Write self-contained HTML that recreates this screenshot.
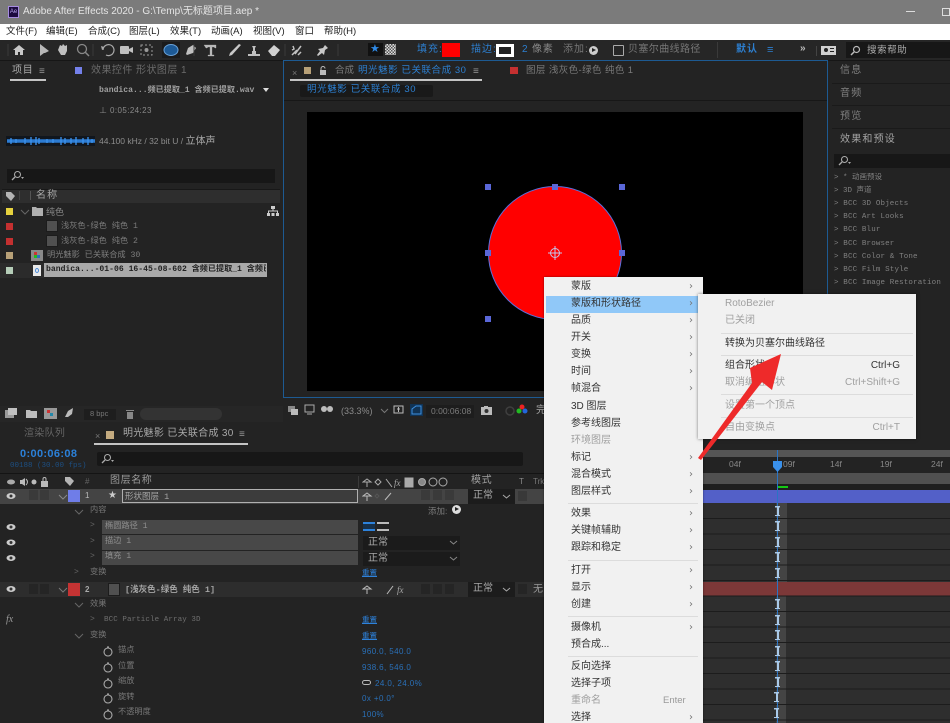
<!DOCTYPE html>
<html style="background:#232323"><head><meta charset="utf-8">
<style>
*{box-sizing:border-box}
html,body{margin:0;padding:0;width:950px;height:723px;overflow:hidden}
body{position:relative;font-family:"Liberation Sans","Noto Sans CJK SC",sans-serif;font-size:10px;color:#9a9a9a;filter:blur(.35px)}
.a{position:absolute}
.t{position:absolute;white-space:nowrap;line-height:14px}
.m{font-family:"Liberation Mono","Noto Sans CJK SC",monospace}
.b{color:#2d7fd0}
.mi{position:absolute;left:571px;font-size:10px;color:#333;white-space:nowrap;line-height:14px}
.ar{position:absolute;left:689px;font-size:10px;color:#777;line-height:14px;font-family:"DejaVu Sans",sans-serif}
.si{position:absolute;left:725px;font-size:10px;color:#333;white-space:nowrap;line-height:14px}
.sr{position:absolute;right:50px;font-size:10px;color:#333;white-space:nowrap;line-height:14px}
.dis{color:#a0a0a0}
.sep{position:absolute;background:#dcdcdc;height:1px}
.h{position:absolute;width:6px;height:6px;background:#5a67d8}
.dd{position:absolute;background:#1b1b1b;height:14px;color:#aaa;font-size:10px;line-height:14px;padding-left:5px}
.k{position:absolute;left:775px;width:5px;height:10px;background:linear-gradient(#a9c9e8,#a9c9e8) center/2px 100% no-repeat,linear-gradient(#a9c9e8,#a9c9e8) top/100% 1.500px no-repeat,linear-gradient(#a9c9e8,#a9c9e8) bottom/100% 1.500px no-repeat}
</style></head><body>

<!-- Title bar -->
<div class="a" style="left:0;top:0;width:950px;height:24px;background:#7b7b7b"></div>
<div class="a" style="left:8px;top:6px;width:11px;height:12px;background:#1c0a3f;border:1px solid #a58be0;color:#b9a6f0;font-size:6px;line-height:10px;text-align:center">Ae</div>
<div class="t" style="left:23px;top:5px;font-size:10px;color:#e4e4e4">Adobe After Effects 2020 - G:\Temp\无标题项目.aep *</div>
<div class="a" style="left:906px;top:11px;width:9px;height:1px;background:#ddd"></div>
<div class="a" style="left:942px;top:8px;width:8px;height:8px;border:1px solid #ddd"></div>

<!-- Menu bar -->
<div class="a" style="left:0;top:24px;width:950px;height:16px;background:#fff"></div>
<div class="t" style="left:6px;top:25px;color:#222;font-size:9.500px">文件(F)</div>
<div class="t" style="left:46px;top:25px;color:#222;font-size:9.500px">编辑(E)</div>
<div class="t" style="left:88px;top:25px;color:#222;font-size:9.500px">合成(C)</div>
<div class="t" style="left:129px;top:25px;color:#222;font-size:9.500px">图层(L)</div>
<div class="t" style="left:170px;top:25px;color:#222;font-size:9.500px">效果(T)</div>
<div class="t" style="left:211px;top:25px;color:#222;font-size:9.500px">动画(A)</div>
<div class="t" style="left:253px;top:25px;color:#222;font-size:9.500px">视图(V)</div>
<div class="t" style="left:295px;top:25px;color:#222;font-size:9.500px">窗口</div>
<div class="t" style="left:324px;top:25px;color:#222;font-size:9.500px">帮助(H)</div>

<!-- Toolbar -->
<div class="a" style="left:0;top:40px;width:950px;height:20px;background:#262626"></div>
<svg class="a" style="left:0;top:40px" width="345" height="20" viewBox="0 0 345 20">
<path d="M13 10l6-5 6 5h-2v5h-3v-3h-2v3h-3v-5z" fill="#c8c8c8"/>
<path d="M40 4v12l4-3 1 0 4-2z" fill="#b8b8b8"/>
<path d="M58 10l2-5 2 1 1-2 2 2 2-1v6l-2 4h-4z" fill="#c0c0c0"/>
<circle cx="82" cy="9" r="4.500" fill="none" stroke="#888" stroke-width="1.300"/><path d="M85 12l4 4" stroke="#888" stroke-width="1.500"/>
<path d="M103 10a5.500 5.500 0 1 1 3 5" fill="none" stroke="#aaa" stroke-width="1.200"/><path d="M101 6l3 1-2 3z" fill="#aaa"/>
<rect x="120" y="6" width="9" height="8" rx="1" fill="#c0c0c0"/><path d="M129 9l4-2v6l-4-2z" fill="#c0c0c0"/>
<rect x="141" y="5" width="11" height="10" fill="none" stroke="#999" stroke-dasharray="2 2"/><circle cx="146.500" cy="10" r="2" fill="#999"/>
<rect x="162" y="2" width="18" height="16" fill="#1b1b1b"/>
<ellipse cx="171" cy="10" rx="7" ry="5.500" fill="#1d5a96" stroke="#6aa2d8"/>
<path d="M186 14l2-6 5-3 3 3-3 5-6 2z" fill="#c0c0c0"/>
<path d="M204 5h12v3h-1l-1-1h-2v8h2v1h-6v-1h2V7h-2l-1 1h-1z" fill="#b8b8b8" stroke="#b8b8b8" stroke-width=".3"/>
<path d="M229 16l3-1 9-10-2-1-9 9z" fill="#c8c8c8"/>
<path d="M248 14h12v2h-12zM252 14v-3h1v-3l-1-2h4l-1 2v3h1v3z" fill="#c0c0c0"/>
<path d="M268 11l6-6 6 5-5 6h-3z" fill="#d0d0d0"/>
<path d="M292 15l5-5M301 6l-6 8M293 6l1 3-2 1M298 15l3-3" stroke="#c0c0c0" stroke-width="1.500"/>
<path d="M317 15l3-4-2-2 5-1 2-3 3 3-3 2-1 5-2-2-4 3z" fill="#c8c8c8"/>
<path d="M8 4v12M93 4v12M194 4v12M285 4v12M338 4v12" stroke="#3a3a3a"/>
</svg>
<div class="a" style="left:368px;top:43px;width:15px;height:13px;background:#111"></div>
<div class="t" style="left:370px;top:42px;color:#2f8ae6;font-size:11px;font-family:'DejaVu Sans',sans-serif">★</div>
<div class="a" style="left:385px;top:44px;width:11px;height:11px;background:repeating-conic-gradient(#ddd 0 25%,#555 0 50%) 0 0/3px 3px"></div>
<div class="t b" style="left:417px;top:43px;font-size:10px;letter-spacing:1px">填充:</div>
<div class="a" style="left:442px;top:43px;width:18px;height:14px;background:#ff0000"></div>
<div class="t b" style="left:471px;top:43px;font-size:10px;letter-spacing:1px">描边:</div>
<div class="a" style="left:496px;top:44px;width:18px;height:13px;background:#222;border:3px solid #fff"></div>
<div class="t b" style="left:522px;top:43px;font-size:10px">2</div>
<div class="t" style="left:532px;top:43px;font-size:10px;letter-spacing:.8px;color:#888">像素</div>
<div class="t" style="left:563px;top:43px;font-size:10px;letter-spacing:1px;color:#777">添加:</div>
<div class="a" style="left:589px;top:46px;width:9px;height:9px;border-radius:50%;background:#ccc"></div>
<div class="a" style="left:592px;top:48px;width:0;height:0;border-left:4px solid #222;border-top:2.500px solid transparent;border-bottom:2.500px solid transparent"></div>
<div class="a" style="left:613px;top:45px;width:11px;height:11px;border:1px solid #aaa;border-radius:1px"></div>
<div class="t" style="left:628px;top:43px;font-size:10px;letter-spacing:.4px;color:#777">贝塞尔曲线路径</div>
<div class="a" style="left:717px;top:42px;width:1px;height:16px;background:#3a3a3a"></div>
<div class="t b" style="left:736px;top:43px;font-size:10px;letter-spacing:1px;font-weight:bold">默认</div>
<div class="t b" style="left:767px;top:43px;font-size:11px">≡</div>
<div class="t" style="left:800px;top:42px;color:#bbb;font-size:10px;font-weight:bold">»</div>
<div class="a" style="left:816px;top:46px;width:1px;height:10px;background:#444"></div>
<div class="a" style="left:821px;top:46px;width:15px;height:9px;background:#d0d0d0"></div>
<div class="a" style="left:824px;top:48px;width:4px;height:4px;border-radius:50%;background:#222"></div>
<div class="a" style="left:830px;top:48px;width:4px;height:1px;background:#222;box-shadow:0 3px #222"></div>
<div class="a" style="left:846px;top:42px;width:104px;height:16px;background:#171717"></div>
<svg class="a" style="left:850px;top:45px" width="11" height="11"><circle cx="6.500" cy="4.500" r="3" fill="none" stroke="#bbb" stroke-width="1.200"/><path d="M4 7l-3 3" stroke="#bbb" stroke-width="1.500"/></svg>
<div class="t" style="left:867px;top:44px;color:#aaa;font-size:9.500px;letter-spacing:.6px">搜索帮助</div>
<div class="a" style="left:0;top:60px;width:950px;height:1px;background:#161616"></div>

<!-- Left panel -->
<div class="a" style="left:0;top:61px;width:283px;height:345px;background:#232323"></div>
<div class="t" style="left:12px;top:64px;font-size:10px;letter-spacing:.8px;color:#aaa">项目</div>
<div class="t" style="left:39px;top:65px;font-size:10px;color:#999">≡</div>
<div class="a" style="left:10px;top:79px;width:36px;height:1.500px;background:#c4c4c4"></div>
<div class="a" style="left:75px;top:67px;width:7px;height:7px;background:#7480ea"></div>
<div class="t" style="left:91px;top:64px;font-size:10px;letter-spacing:.45px;color:#6b6b6b">效果控件 形状图层 1</div>
<div class="t m" style="left:99px;top:84px;font-size:8.100px;color:#a0a0a0;font-weight:bold">bandica...频已提取_1 含频已提取.wav</div>
<div class="a" style="left:263px;top:88px;width:0;height:0;border-top:4px solid #ddd;border-left:3.500px solid transparent;border-right:3.500px solid transparent"></div>
<div class="t" style="left:99px;top:104px;font-size:8px;color:#8a8a8a;letter-spacing:.4px">⊥ 0:05:24:23</div>
<div class="a" style="left:6px;top:136px;width:89px;height:10px;background:#10161e"></div>
<svg class="a" style="left:7px;top:136px" width="88" height="10"><path d="M0 5H88" stroke="#2c7bd2" stroke-width="3.500"/><path d="M4 2v6M9 3v4M18 2v6M24 1v8M29 1v8M32 2v6M40 3v4M46 3v4M54 1v8M58 2v6M64 2v6M69 1v8M76 2v6M81 1v8M85 3v4" stroke="#3d93ee" stroke-width="1.300"/></svg>
<div class="t" style="left:99px;top:134px;font-size:8.500px;color:#8d8d8d">44.100 kHz / 32 bit U / <span style="font-size:10px;color:#a8a8a8">立体声</span></div>
<div class="a" style="left:7px;top:169px;width:268px;height:14px;background:#171717"></div>
<svg class="a" style="left:11px;top:170px" width="15" height="12"><circle cx="6.500" cy="4.500" r="3" fill="none" stroke="#aaa" stroke-width="1.100"/><path d="M4 7l-3 3" stroke="#aaa" stroke-width="1.300"/><path d="M10 7h3l-1.500 2z" fill="#aaa"/></svg>
<div class="a" style="left:2px;top:189px;width:278px;height:14px;background:#2e2e2e;border-top:1px solid #181818"></div>
<svg class="a" style="left:5px;top:191px" width="11" height="11"><path d="M1 1h5l4 4-4 5-5-5z" fill="#b5b5b5"/></svg>
<div class="a" style="left:19px;top:191px;width:1px;height:9px;background:#444"></div>
<div class="a" style="left:30px;top:191px;width:1px;height:9px;background:#555"></div>
<div class="t" style="left:36px;top:189px;font-size:10px;letter-spacing:1.100px;color:#a5a5a5">名称</div>
<div class="a" style="left:6px;top:208px;width:7px;height:7px;background:#e6d23e"></div>
<svg class="a" style="left:20px;top:208px" width="10" height="8"><path d="M1 2l4 4 4-4" fill="none" stroke="#666" stroke-width="1"/></svg>
<svg class="a" style="left:31px;top:205px" width="13" height="12"><path d="M1 2h4l1 1h6v8H1z" fill="#b0b0b0"/></svg>
<div class="t" style="left:46px;top:205px;font-size:9px;color:#8a8a8a">纯色</div>
<svg class="a" style="left:267px;top:205px" width="12" height="12"><rect x="4" y="1" width="4" height="3" fill="#ccc"/><rect x="0" y="8" width="3" height="3" fill="#ccc"/><rect x="4.500" y="8" width="3" height="3" fill="#ccc"/><rect x="9" y="8" width="3" height="3" fill="#ccc"/><path d="M6 4v2M1.500 8V6h9v2" stroke="#ccc" fill="none"/></svg>
<div class="a" style="left:6px;top:223px;width:7px;height:7px;background:#c43030"></div>
<div class="a" style="left:46px;top:220px;width:12px;height:12px;background:#505050;border:1px solid #1c1c1c"></div>
<div class="t m" style="left:61px;top:220px;font-size:8.200px;color:#7a7a7a">浅灰色-绿色 纯色 1</div>
<div class="a" style="left:6px;top:238px;width:7px;height:7px;background:#c43030"></div>
<div class="a" style="left:46px;top:235px;width:12px;height:12px;background:#505050;border:1px solid #1c1c1c"></div>
<div class="t m" style="left:61px;top:235px;font-size:8.200px;color:#7a7a7a">浅灰色-绿色 纯色 2</div>
<div class="a" style="left:6px;top:252px;width:7px;height:7px;background:#b7a077"></div>
<div class="a" style="left:31px;top:250px;width:12px;height:11px;background:#8a8a8a"></div>
<div class="a" style="left:34px;top:252px;width:3px;height:3px;background:#c33"></div>
<div class="a" style="left:37px;top:255px;width:3px;height:3px;background:#2a6fc0;box-shadow:-3px 0 #2b2"></div>
<div class="t m" style="left:47px;top:249px;font-size:8.200px;color:#7e7e7e">明光魅影 已关联合成 30</div>
<div class="a" style="left:0;top:263px;width:44px;height:15px;background:#2b2b2b"></div>
<div class="a" style="left:6px;top:267px;width:7px;height:7px;background:#b5cdb8"></div>
<div class="a" style="left:33px;top:265px;width:8px;height:11px;background:#e8e8e8"></div>
<div class="a" style="left:35px;top:268px;width:4px;height:5px;border:1px solid #4a8ad8;border-radius:50%"></div>
<div class="a" style="left:44px;top:263px;width:223px;height:14px;background:#a9a9a9"></div>
<div class="t m" style="left:46px;top:263px;width:220px;overflow:hidden;font-size:8.100px;color:#222;font-weight:bold">bandica...-01-06 16-45-08-602 含频已提取_1 含频已提取.wav</div>

<!-- Left panel bottom bar -->
<div class="a" style="left:0;top:406px;width:283px;height:16px;background:#262626"></div>
<svg class="a" style="left:4px;top:407px" width="130" height="14">
<rect x="1" y="3" width="9" height="8" fill="#9a9a9a"/><rect x="4" y="1" width="9" height="7" fill="#c0c0c0"/>
<path d="M22 3h4l1 1h6v7H22z" fill="#bcbcbc"/>
<rect x="40" y="1" width="13" height="11" fill="#999"/><rect x="43" y="3" width="3" height="3" fill="#c33"/><rect x="46" y="6" width="3" height="3" fill="#28a"/>
<path d="M61 10l3-6 5-3-1 6-4 3z" fill="#bbb"/>
<path d="M122 3h8v1h-8zM123 5h6v7h-6z" fill="#888"/>
</svg>
<div class="a" style="left:84px;top:409px;width:32px;height:11px;background:#1e1e1e"></div>
<div class="t" style="left:90px;top:407px;font-size:7.500px;color:#777">8 bpc</div>
<div class="a" style="left:140px;top:408px;width:82px;height:12px;border-radius:6px;background:#333"></div>

<!-- Comp panel -->
<div class="a" style="left:283px;top:60px;width:545px;height:338px;border:1px solid #1d5a92;background:#232323"></div>
<div class="t" style="left:292px;top:66px;font-size:9px;color:#777">×</div>
<div class="a" style="left:304px;top:67px;width:7px;height:7px;background:#b7a077"></div>
<svg class="a" style="left:319px;top:66px" width="8" height="9"><rect x="1" y="4" width="6" height="5" fill="#bbb"/><path d="M2 4V2.500a2 2 0 0 1 4 0" fill="none" stroke="#bbb"/></svg>
<div class="t" style="left:335px;top:64px;font-size:9.500px;color:#7d7d7d">合成</div>
<div class="t b" style="left:358px;top:64px;font-size:9.500px;letter-spacing:.55px">明光魅影 已关联合成 30</div>
<div class="t" style="left:473px;top:65px;font-size:10px;color:#999">≡</div>
<div class="a" style="left:290px;top:79px;width:192px;height:1.500px;background:#c4c4c4"></div>
<div class="a" style="left:510px;top:67px;width:8px;height:7px;background:#c43030"></div>
<div class="t" style="left:526px;top:64px;font-size:9.500px;letter-spacing:.4px;color:#7a7a7a">图层 浅灰色-绿色 纯色 1</div>
<div class="a" style="left:300px;top:85px;width:133px;height:12px;background:#191919;border-radius:2px"></div>
<div class="t b" style="left:307px;top:83px;font-size:9.500px;letter-spacing:.6px">明光魅影 已关联合成 30</div>
<div class="a" style="left:284px;top:100px;width:543px;height:1px;background:#171717"></div>
<div class="a" style="left:307px;top:112px;width:496px;height:279px;background:#000"></div>
<div class="a" style="left:488px;top:186px;width:134px;height:134px;border-radius:50%;background:#ff0000;border:1px solid #5a70dc"></div>
<div class="h" style="left:485px;top:184px"></div><div class="h" style="left:552px;top:184px"></div><div class="h" style="left:619px;top:184px"></div>
<div class="h" style="left:485px;top:250px"></div><div class="h" style="left:619px;top:250px"></div>
<div class="h" style="left:485px;top:316px"></div><div class="h" style="left:552px;top:316px"></div>
<svg class="a" style="left:547px;top:245px" width="16" height="16"><circle cx="8" cy="8" r="4.500" fill="none" stroke="#c5c5ea"/><path d="M8 1v14M1 8h14" stroke="#c5c5ea"/></svg>

<!-- Comp bottom bar -->
<svg class="a" style="left:286px;top:403px" width="262" height="16">
<rect x="2" y="3" width="7" height="6" fill="#888"/><rect x="5" y="6" width="7" height="6" fill="#bbb"/>
<rect x="19" y="2" width="9" height="7" fill="none" stroke="#aaa"/><path d="M21 11h5" stroke="#aaa"/>
<circle cx="38" cy="6" r="3" fill="#bbb"/><circle cx="44" cy="6" r="3" fill="#bbb"/>
<rect x="108" y="3" width="9" height="7" fill="none" stroke="#bbb"/><path d="M111 6h3M112.500 4v5" stroke="#bbb"/>
<rect x="124" y="1" width="13" height="12" fill="#103355"/><path d="M126 11V6l4-3h5v8z" fill="none" stroke="#3d8fe0"/>
<rect x="195" y="4" width="11" height="8" fill="#bbb"/><circle cx="200.500" cy="8" r="2" fill="#333"/><rect x="198" y="3" width="4" height="1" fill="#bbb"/>
<circle cx="224" cy="8" r="4" fill="none" stroke="#3f3f3f" stroke-width="1.500"/>
<circle cx="236" cy="4" r="2.500" fill="#e22"/><circle cx="233" cy="8" r="2.500" fill="#2b2"/><circle cx="239" cy="8" r="2.500" fill="#26d"/>
</svg>
<div class="t" style="left:341px;top:404px;font-size:9px;color:#8a8a8a">(33.3%)</div>
<svg class="a" style="left:380px;top:408px" width="9" height="6"><path d="M1 1l3.500 3.500L8 1" stroke="#777" fill="none"/></svg>
<div class="a" style="left:426px;top:405px;width:48px;height:13px;background:#1d1d1d"></div>
<div class="t" style="left:431px;top:404px;font-size:8.500px;color:#7c7c7c">0:00:06:08</div>
<div class="t" style="left:536px;top:404px;font-size:10px;color:#a8a8a8">完</div>

<!-- Right panels -->
<div class="a" style="left:832px;top:83px;width:118px;height:1px;background:#1a1a1a"></div>
<div class="t" style="left:840px;top:64px;font-size:10px;letter-spacing:1.200px;color:#808080">信息</div>
<div class="a" style="left:832px;top:105px;width:118px;height:1px;background:#1a1a1a"></div>
<div class="t" style="left:840px;top:87px;font-size:10px;letter-spacing:1.200px;color:#808080">音频</div>
<div class="a" style="left:832px;top:128px;width:118px;height:1px;background:#1a1a1a"></div>
<div class="t" style="left:840px;top:110px;font-size:10px;letter-spacing:1.200px;color:#808080">预览</div>
<div class="t" style="left:840px;top:133px;font-size:10px;letter-spacing:1.200px;color:#a5a5a5">效果和预设</div>
<div class="a" style="left:834px;top:154px;width:116px;height:14px;background:#171717"></div>
<svg class="a" style="left:838px;top:155px" width="15" height="12"><circle cx="6.500" cy="4.500" r="3" fill="none" stroke="#aaa" stroke-width="1.100"/><path d="M4 7l-3 3" stroke="#aaa" stroke-width="1.300"/><path d="M10 7h3l-1.500 2z" fill="#aaa"/></svg>
<div class="t m" style="left:834px;top:171px;font-size:7.500px;color:#808080">&gt; * 动画预设</div>
<div class="t m" style="left:834px;top:184px;font-size:7.500px;color:#808080">&gt; 3D 声道</div>
<div class="t m" style="left:834px;top:197px;font-size:7.500px;color:#808080;letter-spacing:.15px">&gt; BCC 3D Objects</div>
<div class="t m" style="left:834px;top:210px;font-size:7.500px;color:#808080;letter-spacing:.15px">&gt; BCC Art Looks</div>
<div class="t m" style="left:834px;top:223px;font-size:7.500px;color:#808080;letter-spacing:.15px">&gt; BCC Blur</div>
<div class="t m" style="left:834px;top:237px;font-size:7.500px;color:#808080;letter-spacing:.15px">&gt; BCC Browser</div>
<div class="t m" style="left:834px;top:250px;font-size:7.500px;color:#808080;letter-spacing:.15px">&gt; BCC Color &amp; Tone</div>
<div class="t m" style="left:834px;top:263px;font-size:7.500px;color:#808080;letter-spacing:.15px">&gt; BCC Film Style</div>
<div class="t m" style="left:834px;top:276px;font-size:7.500px;color:#808080;letter-spacing:.15px">&gt; BCC Image Restoration</div>

<!-- Timeline -->
<div class="a" style="left:0;top:423px;width:950px;height:300px;background:#232323"></div>
<div class="t" style="left:24px;top:427px;font-size:10px;letter-spacing:.3px;color:#666">渲染队列</div>
<div class="t" style="left:95px;top:429px;font-size:9px;color:#777">×</div>
<div class="a" style="left:106px;top:431px;width:8px;height:8px;background:#c4ab80"></div>
<div class="t" style="left:123px;top:427px;font-size:10px;letter-spacing:.3px;color:#a8a8a8">明光魅影 已关联合成 30</div>
<div class="t" style="left:239px;top:428px;font-size:10px;color:#999">≡</div>
<div class="a" style="left:94px;top:443px;width:154px;height:1.500px;background:#c4c4c4"></div>
<div class="t" style="left:20px;top:447px;font-size:11px;font-weight:bold;color:#2b80d8;letter-spacing:.35px">0:00:06:08</div>
<div class="t m" style="left:10px;top:459px;font-size:7.500px;color:#1d4f82">00188 (30.00 fps)</div>
<div class="a" style="left:97px;top:452px;width:426px;height:14px;background:#171717;border-radius:2px"></div>
<svg class="a" style="left:101px;top:453px" width="15" height="12"><circle cx="6.500" cy="4.500" r="3" fill="none" stroke="#aaa" stroke-width="1.100"/><path d="M4 7l-3 3" stroke="#aaa" stroke-width="1.300"/><path d="M10 7h3l-1.500 2z" fill="#aaa"/></svg>
<div class="a" style="left:0;top:473px;width:544px;height:1px;background:#141414"></div>
<svg class="a" style="left:5px;top:475px" width="95" height="14">
<ellipse cx="6" cy="7" rx="4" ry="2.500" fill="#aaa"/>
<path d="M15 5h2l3-2v8l-3-2h-2z" fill="#bbb"/><path d="M21 4c2 2 2 4 0 6" fill="none" stroke="#bbb"/>
<circle cx="29" cy="7" r="2.500" fill="#bbb"/>
<rect x="36" y="6" width="7" height="6" fill="#bbb"/><path d="M38 6V4a1.500 1.500 0 0 1 3 0v2" fill="none" stroke="#bbb"/>
<path d="M60 2h5l4 4-4 5-5-5z" fill="#b5b5b5"/>
</svg>
<div class="t" style="left:85px;top:475px;font-size:8px;color:#666">#</div>
<div class="t" style="left:110px;top:474px;font-size:10px;letter-spacing:.6px;color:#9a9a9a">图层名称</div>
<div class="a" style="left:358px;top:476px;width:1px;height:12px;background:#3a3a3a"></div>
<svg class="a" style="left:362px;top:476px" width="95" height="13" stroke="#aaa" fill="none">
<path d="M1 6l4-3 4 3zM5 6v5"/><path d="M13 6l3-3 3 3-3 3z"/><path d="M24 3l6 8"/>
<text x="32" y="10" font-size="9" font-style="italic" fill="#aaa" stroke="none" font-family="Liberation Serif">fx</text>
<rect x="43" y="2" width="8" height="9" fill="#aaa"/><circle cx="60" cy="6" r="3.500" fill="#888"/><circle cx="71" cy="6" r="4"/><circle cx="81" cy="6" r="4"/>
</svg>
<div class="t" style="left:471px;top:474px;font-size:10px;letter-spacing:.6px;color:#a0a0a0">模式</div>
<div class="t" style="left:519px;top:475px;font-size:8px;color:#888">T</div>
<div class="t" style="left:533px;top:475px;font-size:8px;color:#777">Trk</div>
<div class="a" style="left:0;top:489px;width:544px;height:1px;background:#141414"></div>

<!-- Layer 1 -->
<div class="a" style="left:0;top:489px;width:544px;height:15px;background:#444"></div>
<svg class="a" style="left:6px;top:492px" width="11" height="9"><ellipse cx="5" cy="4" rx="4.500" ry="3" fill="#ccc"/><circle cx="5" cy="4" r="1.500" fill="#333"/></svg>
<div class="a" style="left:29px;top:490px;width:9px;height:10px;background:#3a3a3a;box-shadow:11px 0 #3a3a3a"></div>
<svg class="a" style="left:58px;top:494px" width="10" height="7"><path d="M1 1l4 4 4-4" fill="none" stroke="#888"/></svg>
<div class="a" style="left:68px;top:490px;width:12px;height:12px;background:#6f7de8"></div>
<div class="t" style="left:85px;top:489px;font-size:8px;color:#bbb">1</div>
<div class="t" style="left:108px;top:489px;font-size:10px;color:#ccc;font-family:'DejaVu Sans',sans-serif">★</div>
<div class="a" style="left:122px;top:489px;width:236px;height:14px;background:#3c3c3c;border:1px solid #b0b0b0"></div>
<div class="t m" style="left:125px;top:490px;font-size:8.500px;color:#a5a5a5">形状图层 1</div>
<svg class="a" style="left:362px;top:491px" width="30" height="11" stroke="#bbb" fill="none"><path d="M1 5l4-3 4 3zM5 5v5"/><path d="M13 5l2-2 2 2-2 2z" stroke="#555"/><path d="M23 9l6-7"/></svg>
<div class="a" style="left:421px;top:490px;width:9px;height:10px;background:#3a3a3a;box-shadow:12px 0 #3a3a3a,24px 0 #3a3a3a"></div>
<div class="dd" style="left:468px;top:489px;width:47px;height:15px;background:#1c1c1c">正常</div>
<svg class="a" style="left:502px;top:494px" width="9" height="6"><path d="M1 1l3.500 3L8 1" stroke="#aaa" fill="none"/></svg>
<div class="a" style="left:518px;top:491px;width:9px;height:10px;background:#393939"></div>

<!-- Layer children -->
<svg class="a" style="left:74px;top:509px" width="10" height="7"><path d="M1 1l4 4 4-4" fill="none" stroke="#666"/></svg>
<div class="t m" style="left:90px;top:504px;font-size:8.200px;color:#777">内容</div>
<div class="t" style="left:428px;top:504px;font-size:8.500px;color:#7a7a7a">添加:</div>
<div class="a" style="left:452px;top:505px;width:9px;height:9px;border-radius:50%;background:#ddd"></div>
<div class="a" style="left:455px;top:507px;width:0;height:0;border-left:4px solid #222;border-top:2.500px solid transparent;border-bottom:2.500px solid transparent"></div>

<div class="a" style="left:102px;top:520px;width:256px;height:14px;background:#484848"></div>
<div class="a" style="left:102px;top:535px;width:256px;height:15px;background:#484848"></div>
<div class="a" style="left:102px;top:551px;width:256px;height:14px;background:#484848"></div>
<svg class="a" style="left:6px;top:523px" width="11" height="40"><g fill="#ccc"><ellipse cx="5" cy="4" rx="4.500" ry="3"/><ellipse cx="5" cy="19.500" rx="4.500" ry="3"/><ellipse cx="5" cy="35" rx="4.500" ry="3"/></g><g fill="#333"><circle cx="5" cy="4" r="1.500"/><circle cx="5" cy="19.500" r="1.500"/><circle cx="5" cy="35" r="1.500"/></g></svg>
<div class="t m" style="left:90px;top:519px;font-size:8px;color:#666">&gt;</div>
<div class="t m" style="left:90px;top:535px;font-size:8px;color:#666">&gt;</div>
<div class="t m" style="left:90px;top:550px;font-size:8px;color:#666">&gt;</div>
<div class="t m" style="left:105px;top:520px;font-size:8.200px;color:#8f8f8f">椭圆路径 1</div>
<div class="t m" style="left:105px;top:535px;font-size:8.200px;color:#8f8f8f">描边 1</div>
<div class="t m" style="left:105px;top:550px;font-size:8.200px;color:#8f8f8f">填充 1</div>
<div class="a" style="left:363px;top:522px;width:12px;height:9px;border-top:2px solid #2d82dc;border-bottom:2px solid #2d82dc;background:#16304a"></div>
<div class="a" style="left:377px;top:522px;width:12px;height:9px;border-top:2px solid #bbb;border-bottom:2px solid #bbb"></div>
<div class="dd" style="left:363px;top:536px;width:97px">正常</div>
<div class="dd" style="left:363px;top:552px;width:97px">正常</div>
<svg class="a" style="left:449px;top:540px" width="9" height="6"><path d="M1 1l3.500 3L8 1" stroke="#888" fill="none"/></svg>
<svg class="a" style="left:449px;top:556px" width="9" height="6"><path d="M1 1l3.500 3L8 1" stroke="#888" fill="none"/></svg>
<div class="t m" style="left:74px;top:566px;font-size:8px;color:#666">&gt;</div>
<div class="t m" style="left:90px;top:566px;font-size:8.200px;color:#777">变换</div>
<div class="t m" style="left:362px;top:567px;font-size:7.500px;color:#2d82dc;text-decoration:underline">重置</div>

<!-- Layer 2 -->
<div class="a" style="left:0;top:582px;width:544px;height:15px;background:#2d2d2d"></div>
<svg class="a" style="left:6px;top:585px" width="11" height="9"><ellipse cx="5" cy="4" rx="4.500" ry="3" fill="#ccc"/><circle cx="5" cy="4" r="1.500" fill="#333"/></svg>
<div class="a" style="left:29px;top:584px;width:9px;height:10px;background:#252525;box-shadow:11px 0 #252525"></div>
<svg class="a" style="left:58px;top:587px" width="10" height="7"><path d="M1 1l4 4 4-4" fill="none" stroke="#777"/></svg>
<div class="a" style="left:68px;top:583px;width:12px;height:13px;background:#c43333"></div>
<div class="t" style="left:85px;top:583px;font-size:8px;color:#aaa;font-weight:bold">2</div>
<div class="a" style="left:108px;top:583px;width:12px;height:13px;background:#505050;border:1px solid #1c1c1c"></div>
<div class="t m" style="left:125px;top:583px;font-size:8.500px;color:#a5a5a5;font-weight:bold">[浅灰色-绿色 纯色 1]</div>
<svg class="a" style="left:362px;top:584px" width="45" height="12" stroke="#bbb" fill="none"><path d="M1 5l4-3 4 3zM5 5v5"/><path d="M25 10l6-8"/><text x="35" y="9" font-size="9" font-style="italic" fill="#aaa" stroke="none" font-family="Liberation Serif">fx</text></svg>
<div class="a" style="left:421px;top:584px;width:9px;height:10px;background:#252525;box-shadow:12px 0 #252525,24px 0 #252525"></div>
<div class="dd" style="left:468px;top:582px;width:47px;height:15px;background:#1c1c1c">正常</div>
<svg class="a" style="left:502px;top:587px" width="9" height="6"><path d="M1 1l3.500 3L8 1" stroke="#aaa" fill="none"/></svg>
<div class="a" style="left:518px;top:584px;width:9px;height:10px;background:#252525"></div>
<div class="t" style="left:533px;top:583px;font-size:10px;color:#999">无</div>

<svg class="a" style="left:74px;top:602px" width="10" height="7"><path d="M1 1l4 4 4-4" fill="none" stroke="#666"/></svg>
<div class="t m" style="left:90px;top:598px;font-size:8.200px;color:#777">效果</div>
<div class="t" style="left:6px;top:613px;font-size:10px;font-style:italic;color:#999;font-family:'Liberation Serif',serif">fx</div>
<div class="t m" style="left:90px;top:613px;font-size:8px;color:#666">&gt;</div>
<div class="t m" style="left:104px;top:613px;font-size:7.500px;color:#6f6f6f;letter-spacing:.1px">BCC Particle Array 3D</div>
<div class="t m" style="left:362px;top:614px;font-size:7.500px;color:#2d82dc;text-decoration:underline">重置</div>
<svg class="a" style="left:74px;top:633px" width="10" height="7"><path d="M1 1l4 4 4-4" fill="none" stroke="#666"/></svg>
<div class="t m" style="left:90px;top:629px;font-size:8.200px;color:#777">变换</div>
<div class="t m" style="left:362px;top:630px;font-size:7.500px;color:#2d82dc;text-decoration:underline">重置</div>
<svg class="a" style="left:102px;top:645px" width="12" height="75" fill="none" stroke="#aaa" stroke-width="1.100"><circle cx="6" cy="7" r="4"/><path d="M5 2h2"/><circle cx="6" cy="23" r="4"/><path d="M5 18h2"/><circle cx="6" cy="39" r="4"/><path d="M5 34h2"/><circle cx="6" cy="54" r="4"/><path d="M5 49h2"/><circle cx="6" cy="70" r="4"/><path d="M5 65h2"/></svg>
<div class="t m" style="left:118px;top:644px;font-size:8.200px;color:#777">锚点</div>
<div class="t m" style="left:118px;top:660px;font-size:8.200px;color:#777">位置</div>
<div class="t m" style="left:118px;top:675px;font-size:8.200px;color:#777">缩放</div>
<div class="t m" style="left:118px;top:691px;font-size:8.200px;color:#777">旋转</div>
<div class="t m" style="left:118px;top:706px;font-size:8.200px;color:#777">不透明度</div>
<div class="t" style="left:362px;top:645px;font-size:8px;color:#2a70b8;letter-spacing:.4px">960.0, 540.0</div>
<div class="t" style="left:362px;top:661px;font-size:8px;color:#2a70b8;letter-spacing:.4px">938.6, 546.0</div>
<div class="a" style="left:362px;top:680px;width:9px;height:5px;border:1px solid #bbb;border-radius:3px"></div>
<div class="t" style="left:375px;top:677px;font-size:8px;color:#2a70b8;letter-spacing:.4px">24.0, 24.0%</div>
<div class="t" style="left:362px;top:692px;font-size:8px;color:#2a70b8;letter-spacing:.4px">0x +0.0°</div>
<div class="t" style="left:362px;top:708px;font-size:8px;color:#2a70b8;letter-spacing:.4px">100%</div>

<!-- Timeline right -->
<div class="a" style="left:703px;top:450px;width:247px;height:273px;background:#2e2e2e"></div>
<div class="a" style="left:703px;top:450px;width:247px;height:7px;background:#555"></div>
<div class="a" style="left:703px;top:457px;width:247px;height:16px;background:#232323"></div>
<div class="t" style="left:729px;top:457px;font-size:8.500px;color:#888">04f</div>
<div class="t" style="left:783px;top:457px;font-size:8.500px;color:#888">09f</div>
<div class="t" style="left:830px;top:457px;font-size:8.500px;color:#888">14f</div>
<div class="t" style="left:880px;top:457px;font-size:8.500px;color:#888">19f</div>
<div class="t" style="left:931px;top:457px;font-size:8.500px;color:#888">24f</div>
<div class="a" style="left:703px;top:473px;width:247px;height:11px;background:#505050"></div>
<div class="a" style="left:703px;top:484px;width:247px;height:6px;background:#1f1f1f"></div>
<div class="a" style="left:777px;top:486px;width:11px;height:2px;background:#14c814"></div>
<div class="a" style="left:703px;top:490px;width:247px;height:13px;background:#5360c8"></div>
<div class="a" style="left:703px;top:582px;width:247px;height:14px;background:#7c3838"></div>
<div class="a" style="left:776px;top:503px;width:11px;height:79px;background:#444"></div>
<div class="a" style="left:776px;top:596px;width:10px;height:127px;background:#444"></div>
<div class="a" style="left:703px;top:518px;width:247px;height:205px;background:repeating-linear-gradient(to bottom,#1c1c1c 0,#1c1c1c 1px,transparent 1px,transparent 15.500px)"></div>
<div class="a" style="left:777px;top:450px;width:1px;height:273px;background:#2a74c4"></div>
<svg class="a" style="left:773px;top:460px" width="10" height="13"><path d="M0 1h9v6l-4.500 5L0 7z" fill="#3a90ea"/></svg>
<div class="k" style="top:506px"></div><div class="k" style="top:521px"></div><div class="k" style="top:537px"></div><div class="k" style="top:552px"></div><div class="k" style="top:568px"></div>
<div class="k" style="top:599px"></div><div class="k" style="top:615px"></div><div class="k" style="top:630px"></div><div class="k" style="top:646px"></div><div class="k" style="top:661px"></div><div class="k" style="top:677px"></div><div class="k" style="top:692px;left:774px"></div><div class="k" style="top:708px;left:774px"></div>

<!-- Context menu -->
<div class="a" style="left:544px;top:277px;width:159px;height:446px;background:#f1f1f1;box-shadow:0 0 2px rgba(0,0,0,.5)"></div>
<div class="a" style="left:546px;top:296px;width:157px;height:17px;background:#90c8f8"></div>
<div class="mi" style="top:280px">蒙版</div><div class="ar" style="top:280px">›</div>
<div class="mi" style="top:297px">蒙版和形状路径</div><div class="ar" style="top:297px">›</div>
<div class="mi" style="top:314px">品质</div><div class="ar" style="top:314px">›</div>
<div class="mi" style="top:331px">开关</div><div class="ar" style="top:331px">›</div>
<div class="mi" style="top:348px">变换</div><div class="ar" style="top:348px">›</div>
<div class="mi" style="top:365px">时间</div><div class="ar" style="top:365px">›</div>
<div class="mi" style="top:382px">帧混合</div><div class="ar" style="top:382px">›</div>
<div class="mi" style="top:400px">3D 图层</div>
<div class="mi" style="top:417px">参考线图层</div>
<div class="mi dis" style="top:434px">环境图层</div>
<div class="mi" style="top:451px">标记</div><div class="ar" style="top:451px">›</div>
<div class="mi" style="top:468px">混合模式</div><div class="ar" style="top:468px">›</div>
<div class="mi" style="top:485px">图层样式</div><div class="ar" style="top:485px">›</div>
<div class="sep" style="left:568px;top:503px;width:130px"></div>
<div class="mi" style="top:507px">效果</div><div class="ar" style="top:507px">›</div>
<div class="mi" style="top:524px">关键帧辅助</div><div class="ar" style="top:524px">›</div>
<div class="mi" style="top:541px">跟踪和稳定</div><div class="ar" style="top:541px">›</div>
<div class="sep" style="left:568px;top:560px;width:130px"></div>
<div class="mi" style="top:564px">打开</div><div class="ar" style="top:564px">›</div>
<div class="mi" style="top:581px">显示</div><div class="ar" style="top:581px">›</div>
<div class="mi" style="top:598px">创建</div><div class="ar" style="top:598px">›</div>
<div class="sep" style="left:568px;top:616px;width:130px"></div>
<div class="mi" style="top:621px">摄像机</div><div class="ar" style="top:621px">›</div>
<div class="mi" style="top:638px">预合成...</div>
<div class="sep" style="left:568px;top:656px;width:130px"></div>
<div class="mi" style="top:660px">反向选择</div>
<div class="mi" style="top:677px">选择子项</div>
<div class="mi dis" style="top:694px">重命名</div>
<div class="t" style="left:663px;top:694px;font-size:9.500px;color:#999">Enter</div>
<div class="mi" style="top:711px">选择</div><div class="ar" style="top:711px">›</div>

<!-- Submenu -->
<div class="a" style="left:698px;top:294px;width:218px;height:145px;background:#f1f1f1;box-shadow:0 0 3px rgba(0,0,0,.5)"></div>
<div class="si dis" style="top:297px">RotoBezier</div>
<div class="si dis" style="top:314px">已关闭</div>
<div class="sep" style="left:721px;top:333px;width:192px"></div>
<div class="si" style="top:337px">转换为贝塞尔曲线路径</div>
<div class="sep" style="left:721px;top:355px;width:192px"></div>
<div class="si" style="top:359px">组合形状</div><div class="sr" style="top:359px">Ctrl+G</div>
<div class="si dis" style="top:376px">取消编组形状</div><div class="sr dis" style="top:376px">Ctrl+Shift+G</div>
<div class="sep" style="left:721px;top:394px;width:192px"></div>
<div class="si dis" style="top:399px">设置第一个顶点</div>
<div class="sep" style="left:721px;top:417px;width:192px"></div>
<div class="si dis" style="top:421px">自由变换点</div><div class="sr dis" style="top:421px">Ctrl+T</div>

<!-- Red arrow -->
<svg class="a" style="left:690px;top:345px" width="100" height="120"><path d="M8 113L62 38 60 23 91 9 82 45 72 37 11 115z" fill="#ee2a2a"/></svg>

</body></html>
